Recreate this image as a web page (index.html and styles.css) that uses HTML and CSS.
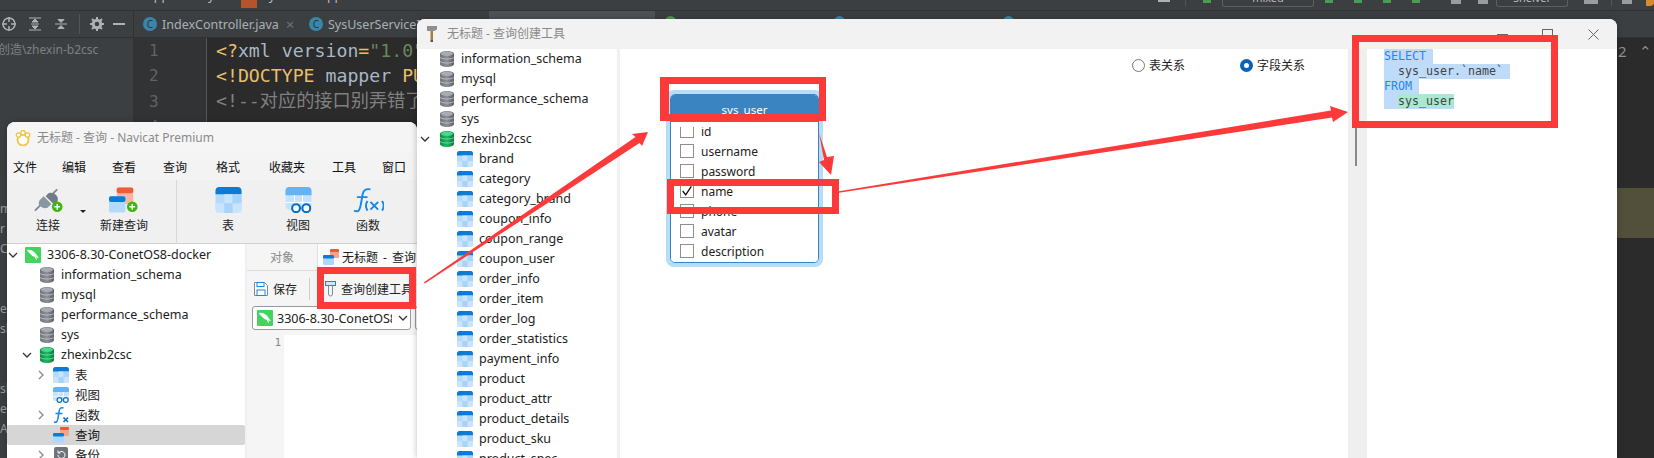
FILE: index.html
```html
<!DOCTYPE html>
<html lang="zh">
<head>
<meta charset="utf-8">
<title>Navicat 查询创建工具</title>
<link rel="stylesheet" href="styles.css">
</head>
<body>
<svg class="defs" aria-hidden="true">
  <defs>
    <linearGradient id="gGrey" x1="0" y1="0" x2="1" y2="0"><stop offset="0" stop-color="#6f757b"/><stop offset=".5" stop-color="#8d9197"/><stop offset="1" stop-color="#5b6066"/></linearGradient>
    <linearGradient id="gGreen" x1="0" y1="0" x2="1" y2="0"><stop offset="0" stop-color="#0c8a46"/><stop offset=".5" stop-color="#1fb866"/><stop offset="1" stop-color="#087a3c"/></linearGradient>
    <symbol id="db" viewBox="0 0 14 16"><path d="M0 3c0-4 14-4 14 0v10c0 4-14 4-14 0z" fill="url(#gGrey)"/><ellipse cx="7" cy="2.8" rx="6" ry="2.2" fill="#a9adb2"/><path d="M0 6.5c2 2 12 2 14 0M0 10.500c2 2 12 2 14 0" stroke="#d2d4d6" stroke-width=".7" fill="none"/></symbol>
    <symbol id="dbg" viewBox="0 0 14 16"><path d="M0 3c0-4 14-4 14 0v10c0 4-14 4-14 0z" fill="url(#gGreen)"/><ellipse cx="7" cy="2.800" rx="6" ry="2.200" fill="#4fd38d"/><path d="M0 6.500c2 2 12 2 14 0M0 10.500c2 2 12 2 14 0" stroke="#8fe6b8" stroke-width=".7" fill="none"/></symbol>
    <symbol id="tbl" viewBox="0 0 16 16"><rect width="16" height="16" rx="2.500" fill="#b4dbfc"/><path d="M0 2.500A2.500 2.500 0 0 1 2.500 0h11A2.500 2.500 0 0 1 16 2.500V4.500H0z" fill="#0d7bd6"/><path d="M5.500 4.500h5v5.500h-5zM0 10h5.500V16H2.500A2.500 2.500 0 0 1 0 13.500zM10.500 10H16v3.500a2.500 2.500 0 0 1-2.500 2.500h-3z" fill="#c9e5fd"/><path d="M10.500 4.500H16v5.500h-5.500zM5.500 10h5V16h-5z" fill="#a6d4fa"/></symbol>
    <symbol id="view" viewBox="0 0 16 16"><rect width="16" height="14" rx="2.500" fill="#c5e3fd"/><path d="M0 2.500A2.500 2.500 0 0 1 2.500 0h11A2.500 2.500 0 0 1 16 2.500V5H0z" fill="#63b3f6"/><path d="M5.500 5v9M10.500 5v9M0 9.500h16" stroke="#fff" stroke-width=".6"/><circle cx="6.500" cy="13" r="2.400" fill="#fff" stroke="#0d6fc4" stroke-width="1.300"/><circle cx="12.800" cy="13" r="2.400" fill="#fff" stroke="#0d6fc4" stroke-width="1.300"/></symbol>
    <symbol id="func" viewBox="0 0 16 16"><path d="M1 15c3 1 3.500-1 4-4l1.200-7c.4-2.500 1.600-3.800 4.300-3M2.500 6.500h7" fill="none" stroke="#1488e6" stroke-width="1.500"/><path d="M10.500 10.500l4.500 4.500M15 10.500L10.500 15" stroke="#0d6fc4" stroke-width="1.600"/></symbol>
    <symbol id="query" viewBox="0 0 16 16"><rect x="7" y="0" width="9" height="9" rx="1.500" fill="#f5a48a"/><rect x="7" y="0" width="9" height="3" rx="1.200" fill="#ea5a37"/><rect x="0" y="6" width="11" height="10" rx="1.500" fill="#aed8fb"/><rect x="0" y="6" width="11" height="3.400" rx="1.200" fill="#0d7bd6"/></symbol>
    <symbol id="mysql" viewBox="0 0 16 16"><rect width="16" height="16" rx="1" fill="#43d45f"/><path d="M2 3c3-1 7 1 9 4 1 1.500 2 3 3 3.500-1 .5-2 .2-2.800-.3L12 13c-1-.5-1.800-1.500-2.200-3C8 9.500 6 8 4.500 6 3.500 5.500 2.500 4.500 2 3z" fill="#fff"/></symbol>
    <symbol id="cr" viewBox="0 0 10 10"><path d="M3 1l4 4-4 4" fill="none" stroke="#8a8a8a" stroke-width="1.300"/></symbol>
    <symbol id="cd" viewBox="0 0 10 10"><path d="M1 3l4 4 4-4" fill="none" stroke="#333" stroke-width="1.300"/></symbol>
  </defs>
</svg>

<div class="ide">
  <div class="ide-top">
    <div class="crumbs">
      <span class="crumb-mapper">mapper</span><span class="crumb-sep">/</span><span class="crumb-sys">sys</span><span class="crumb-sep">/</span><i class="crumb-icon"></i><span class="crumb-file">SysUserMapper.xml</span>
    </div>
    <div class="run">
      <i class="r-bar"></i><i class="r-sep"></i><i class="r-green r-a"></i>
      <div class="r-box r-box-a"><span>mixed</span></div>
      <i class="r-green r-b"></i><i class="r-green r-c"></i><i class="r-green r-c"></i><i class="r-green r-c"></i>
      <i class="r-grey r-d"></i><i class="r-grey r-e"></i>
      <div class="r-box r-box-b"><span>Shelver</span></div>
      <i class="r-grey r-f"></i><i class="r-sep r-g"></i><i class="r-grey r-h"></i><i class="r-orange"></i>
    </div>
  </div>
  <div class="ide-tabs">
    <div class="tools">
      <svg class="tool" viewBox="0 0 14 14"><circle cx="7" cy="7" r="6" fill="none" stroke="#afb1b3" stroke-width="1.500"/><path d="M7 0v5M7 9v5M0 7h5M9 7h5" stroke="#afb1b3" stroke-width="1.500"/></svg>
      <svg class="tool" viewBox="0 0 14 14"><path d="M1 1h12M1 13h12M3 7h8M7 2l3 3H4zM7 12l3-3H4z" stroke="#afb1b3" fill="#afb1b3"/></svg>
      <svg class="tool" viewBox="0 0 14 14"><path d="M1 7h12M7 5.500l3-3H4zM7 8.500l3 3H4z" stroke="#afb1b3" fill="#afb1b3"/></svg>
      <i class="tool-sep"></i>
      <svg class="tool" viewBox="0 0 14 14"><circle cx="7" cy="7" r="3.800" fill="none" stroke="#afb1b3" stroke-width="3"/><path d="M7 0v3M7 11v3M0 7h3M11 7h3M2 2l2 2M10 10l2 2M2 12l2-2M10 4l2-2" stroke="#afb1b3" stroke-width="2"/></svg>
      <i class="tool-min"></i>
    </div>
    <div class="tab"><b class="cls">C</b><span>IndexController.java</span><em class="x">×</em></div>
    <div class="tab tab-b"><b class="cls">C</b><span>SysUserServiceImpl.java</span></div>
    <div class="tab-hi"></div>
    <i class="dot dot-g"></i><i class="dot dot-b1"></i><i class="dot dot-b2"></i>
  </div>
  <div class="ide-main">
    <div class="project">
      <div class="project-path">创造\zhexin-b2csc</div>
      <div class="project-frags">
        <span>m</span><span>r</span><span>C</span><span></span><span></span><span>er</span><span>sl</span><span></span><span></span><span>sl</span><span>e</span><span>Ap</span>
      </div>
    </div>
    <div class="lines"><span>1</span><span>2</span><span>3</span><span>4</span></div>
    <div class="code">
<div class="ln"><span class="o">&lt;?</span><span class="g">xml version</span><span class="o">=</span><span class="s">"1.0" encoding="UTF-8"</span><span class="o">?&gt;</span></div>
<div class="ln"><span class="o">&lt;!DOCTYPE</span> <span class="g">mapper</span> <span class="o">PUBLIC</span></div>
<div class="ln"><span class="c">&lt;!--对应的接口别弄错了--&gt;</span></div>
<div class="ln"><span class="o">&lt;mapper namespace=</span></div>
<div class="ln"></div>
<div class="ln"></div>
<div class="ln hl"></div>
<div class="ln hl"></div>
    </div>
    <div class="inspect"><span>2</span><span>⌃</span></div>
  </div>
</div>

<section class="win navicat">
  <header class="title">
    <svg class="logo" viewBox="0 0 16 16"><circle cx="8" cy="10" r="5.500" fill="#fff" stroke="#f0c53f" stroke-width="1.800"/><circle cx="3.500" cy="5" r="2.200" fill="#fff" stroke="#f0c53f" stroke-width="1.300"/><circle cx="8" cy="2.800" r="2.200" fill="#fff" stroke="#f0c53f" stroke-width="1.300"/><circle cx="12.500" cy="5" r="2.200" fill="#fff" stroke="#f0c53f" stroke-width="1.300"/></svg>
    <span>无标题 - 查询 - Navicat Premium</span>
  </header>
  <nav class="menu"><span>文件</span><span>编辑</span><span>查看</span><span>查询</span><span>格式</span><span>收藏夹</span><span>工具</span><span>窗口</span></nav>
  <div class="toolbar">
    <div class="tb-item">
      <svg class="tb-icon" viewBox="0 0 32 26"><path d="M2 24l6-6M25 2l-5 5" stroke="#7f8b98" stroke-width="2"/><path d="M7 13l4-4 8 8-4 4c-3 1-6 0-8-2s-1-4 0-6z" fill="#8b96a3"/><path d="M13 9l3-3c3-1 6 0 8 2s2 5 1 7l-3 3z" fill="#707c89"/><circle cx="25" cy="20" r="5.500" fill="#3fb80e"/><path d="M25 17v6M22 20h6" stroke="#fff" stroke-width="1.500"/></svg>
      <span>连接</span>
    </div>
    <i class="caret"></i>
    <div class="tb-item">
      <svg class="tb-icon" viewBox="0 0 32 26"><rect x="8" y="0" width="17" height="17" rx="2" fill="#f9b5a0"/><rect x="8" y="0" width="17" height="6" rx="2" fill="#ec5e3a"/><rect x="0" y="9" width="17" height="17" rx="2" fill="#b2dafc"/><rect x="0" y="9" width="17" height="6" rx="2" fill="#0d7bd6"/><circle cx="24" cy="20" r="5.500" fill="#3fb80e"/><path d="M24 17v6M21 20h6" stroke="#fff" stroke-width="1.500"/></svg>
      <span>新建查询</span>
    </div>
    <i class="tb-sep"></i>
    <div class="tb-item"><svg class="tb-icon"><use href="#tbl"/></svg><span>表</span></div>
    <div class="tb-item"><svg class="tb-icon"><use href="#view"/></svg><span>视图</span></div>
    <div class="tb-item">
      <svg class="tb-icon" viewBox="0 0 32 26"><path d="M1 24c5 2 6-1 7-6L10 7c.7-4 3-6 8-5M4 10h11" fill="none" stroke="#1488e6" stroke-width="2"/><path d="M15 14c-2 3-2 7 0 10M30 14c2 3 2 7 0 10M18 15l8 8M26 15l-8 8" fill="none" stroke="#1488e6" stroke-width="2"/></svg>
      <span>函数</span>
    </div>
  </div>
  <div class="nav-body">
    <div class="tree nav-tree">
      <div class="row l0"><svg class="chev"><use href="#cd"/></svg><svg class="ic16"><use href="#mysql"/></svg><span>3306-8.30-ConetOS8-docker</span></div>
      <div class="row l1"><i class="chev"></i><svg class="ic14"><use href="#db"/></svg><span>information_schema</span></div>
      <div class="row l1"><i class="chev"></i><svg class="ic14"><use href="#db"/></svg><span>mysql</span></div>
      <div class="row l1"><i class="chev"></i><svg class="ic14"><use href="#db"/></svg><span>performance_schema</span></div>
      <div class="row l1"><i class="chev"></i><svg class="ic14"><use href="#db"/></svg><span>sys</span></div>
      <div class="row l1"><svg class="chev"><use href="#cd"/></svg><svg class="ic14"><use href="#dbg"/></svg><span>zhexinb2csc</span></div>
      <div class="row l2"><svg class="chev"><use href="#cr"/></svg><svg class="ic16"><use href="#tbl"/></svg><span>表</span></div>
      <div class="row l2"><i class="chev"></i><svg class="ic16"><use href="#view"/></svg><span>视图</span></div>
      <div class="row l2"><svg class="chev"><use href="#cr"/></svg><svg class="ic16"><use href="#func"/></svg><span>函数</span></div>
      <div class="row l2 sel"><i class="chev"></i><svg class="ic16"><use href="#query"/></svg><span>查询</span></div>
      <div class="row l2"><svg class="chev"><use href="#cr"/></svg><svg class="ic16" viewBox="0 0 16 16"><rect width="14" height="16" x="1" rx="2" fill="#6d747b"/><path d="M5 8a3.500 3.500 0 1 0 1-2.500M5 3.500v2.500h2.500" fill="none" stroke="#fff"/></svg><span>备份</span></div>
    </div>
    <div class="pane-split"></div>
    <div class="pane">
      <div class="pane-tabs">
        <span class="obj-tab">对象</span>
        <span class="q-tab"><svg class="ic16 q-ic"><use href="#query"/></svg>无标题 - 查询</span>
      </div>
      <div class="pane-tools">
        <svg class="save" viewBox="0 0 16 16"><path d="M1.500 1.500h10l3 3v10h-13z" fill="#fff" stroke="#7f8b98"/><rect x="4" y="1.500" width="7" height="4" fill="#fff" stroke="#1488e6"/><rect x="4" y="9" width="8" height="5.500" fill="#fff" stroke="#1488e6"/></svg>
        <span>保存</span>
        <i class="pane-sep"></i>
        <svg class="qtool" viewBox="0 0 11 16"><rect x=".5" y=".5" width="10" height="4" fill="#cfe6fb" stroke="#1488e6"/><path d="M3.500 4.500v8.500a2 2 0 0 0 4 0V4.500" fill="none" stroke="#7f8b98"/></svg>
        <span>查询创建工具</span>
      </div>
      <div class="combos">
        <div class="combo"><svg class="ic16"><use href="#mysql"/></svg><span class="combo-text">3306-8.30-ConetOS8-docker</span><svg class="combo-chev"><use href="#cd"/></svg></div>
        <div class="combo combo-b"></div>
      </div>
      <div class="nav-editor"><div class="nav-gutter">1</div><div class="nav-text"></div></div>
    </div>
  </div>
</section>

<section class="win creator">
  <header class="title c-title">
    <svg class="hammer" viewBox="0 0 12 16"><path d="M1 0h10v3.500l-3 1.500H1z" fill="#8f8f8f"/><rect x="4.500" y="5" width="2.500" height="9" fill="#b07a43"/><rect x="4.500" y="14" width="2.500" height="2" fill="#555"/></svg>
    <span>无标题 - 查询创建工具</span>
    <div class="controls">
      <i class="c-min"></i><i class="c-max"></i>
      <svg class="c-close" viewBox="0 0 11 11"><path d="M.5.500l10 10M10.500.500l-10 10" stroke="#666"/></svg>
    </div>
  </header>
  <div class="c-body">
    <div class="tree c-tree">
      <div class="row c1"><i class="chev"></i><svg class="ic14"><use href="#db"/></svg><span>information_schema</span></div>
      <div class="row c1"><i class="chev"></i><svg class="ic14"><use href="#db"/></svg><span>mysql</span></div>
      <div class="row c1"><i class="chev"></i><svg class="ic14"><use href="#db"/></svg><span>performance_schema</span></div>
      <div class="row c1"><i class="chev"></i><svg class="ic14"><use href="#db"/></svg><span>sys</span></div>
      <div class="row c1"><svg class="chev"><use href="#cd"/></svg><svg class="ic14"><use href="#dbg"/></svg><span>zhexinb2csc</span></div>
      <div class="row c2"><svg class="ic16"><use href="#tbl"/></svg><span>brand</span></div>
      <div class="row c2"><svg class="ic16"><use href="#tbl"/></svg><span>category</span></div>
      <div class="row c2"><svg class="ic16"><use href="#tbl"/></svg><span>category_brand</span></div>
      <div class="row c2"><svg class="ic16"><use href="#tbl"/></svg><span>coupon_info</span></div>
      <div class="row c2"><svg class="ic16"><use href="#tbl"/></svg><span>coupon_range</span></div>
      <div class="row c2"><svg class="ic16"><use href="#tbl"/></svg><span>coupon_user</span></div>
      <div class="row c2"><svg class="ic16"><use href="#tbl"/></svg><span>order_info</span></div>
      <div class="row c2"><svg class="ic16"><use href="#tbl"/></svg><span>order_item</span></div>
      <div class="row c2"><svg class="ic16"><use href="#tbl"/></svg><span>order_log</span></div>
      <div class="row c2"><svg class="ic16"><use href="#tbl"/></svg><span>order_statistics</span></div>
      <div class="row c2"><svg class="ic16"><use href="#tbl"/></svg><span>payment_info</span></div>
      <div class="row c2"><svg class="ic16"><use href="#tbl"/></svg><span>product</span></div>
      <div class="row c2"><svg class="ic16"><use href="#tbl"/></svg><span>product_attr</span></div>
      <div class="row c2"><svg class="ic16"><use href="#tbl"/></svg><span>product_details</span></div>
      <div class="row c2"><svg class="ic16"><use href="#tbl"/></svg><span>product_sku</span></div>
      <div class="row c2"><svg class="ic16"><use href="#tbl"/></svg><span>product_spec</span></div>
    </div>
    <div class="c-split"></div>
    <div class="canvas">
      <div class="radios">
        <label class="radio"><i class="rad"></i>表关系</label>
        <label class="radio"><i class="rad on"></i>字段关系</label>
      </div>
      <div class="er">
        <div class="er-inner">
          <div class="er-head">sys_user</div>
          <div class="er-body">
            <div class="er-scroll">
              <div class="er-row"><i class="cb"></i>id</div>
              <div class="er-row"><i class="cb"></i>username</div>
              <div class="er-row"><i class="cb"></i>password</div>
              <div class="er-row"><i class="cb"><svg viewBox="0 0 14 14"><path d="M2 7l3.500 4.500L12 1.500" fill="none" stroke="#111" stroke-width="1.500"/></svg></i>name</div>
              <div class="er-row"><i class="cb"></i>phone</div>
              <div class="er-row"><i class="cb"></i>avatar</div>
              <div class="er-row"><i class="cb"></i>description</div>
            </div>
          </div>
        </div>
      </div>
    </div>
    <div class="c-gutter"><i class="thumb"></i></div>
    <div class="sql">
<div class="sql-ln sql-sel"><span class="kw">SELECT </span></div>
<div class="sql-ln sql-sel">  sys_user.`name` </div>
<div class="sql-ln sql-sel"><span class="kw">FROM </span></div>
<div class="sql-ln sql-sel">  <span class="sql-hit">sys_user</span></div>
    </div>
  </div>
</section>

<div class="mark m-tool"></div>
<div class="mark m-head"></div>
<div class="mark m-name"></div>
<div class="mark m-sql"></div>
<svg class="arrows" viewBox="0 0 1654 458" aria-hidden="true">
  <polygon points="424,282.300 635.500,137.100 632,134 648,132 642,146 639.500,142.900 424.800,283.500"/>
  <polygon points="819,133 827,157 834,156 831,175 819,162 824,160"/>
  <polygon points="839,191.200 1331,110.500 1330,106 1348,112 1333,122 1332,117.500 839,192.800"/>
</svg>
</body>
</html>
```

FILE: styles.css
```css
* { box-sizing: border-box; }
html, body { margin: 0; height: 100%; }
body {
  width: 1654px;
  height: 458px;
  overflow: hidden;
  position: relative;
  background: #2b2b2b;
  font-family: "Noto Sans", "Noto Sans CJK SC", sans-serif;
  font-size: 12px;
  color: #222;
}
i, em { font-style: normal; }
.defs { position: absolute; width: 0; height: 0; }

/* IDE behind the windows */
.ide { display: flex; flex-direction: column; height: 458px; background: #2b2b2b; }
.ide-top {
  height: 11px; flex: none; background: #3c3f41; border-bottom: 1px solid #323232;
  display: flex; justify-content: space-between; overflow: hidden;
}
.crumbs { display: flex; align-items: flex-end; height: 3px; padding-left: 135px; color: #bbb; font-size: 12.500px; line-height: 14px; }
.crumb-sep { margin: 0 8px; color: #777; }
.crumb-icon { width: 16px; height: 8px; background: #b5532b; margin-right: 5px; flex: none; align-self: flex-start; margin-bottom: -5px; }
.crumb-mapper, .crumb-sys, .crumb-file { white-space: nowrap; }
.run { display: flex; align-items: flex-start; height: 10px; }
.run i { display: block; flex: none; }
.r-bar { width: 12px; height: 2px; background: #afb1b3; margin-right: 15px; }
.r-sep { width: 1px; height: 6px; background: #555; margin-right: 17px; }
.r-green { width: 8px; height: 3px; background: #499c54; }
.r-a { margin-right: 11px; }
.r-box { width: 92px; height: 7px; border: 1px solid #5e6060; border-top: 0; border-radius: 0 0 3px 3px; overflow: hidden; flex: none; }
.r-box span { display: block; margin-top: -8px; font-size: 11px; line-height: 11px; text-align: center; color: #bbb; }
.r-b { margin-left: 11px; }
.r-c { margin-left: 21px; }
.r-grey { width: 10px; height: 4px; background: #9a9c9e; }
.r-d { margin-left: 31px; }
.r-e { margin-left: 17px; }
.r-box-b { width: 72px; margin-left: 8px; }
.r-f { margin-left: 16px; width: 14px; }
.r-g { margin: 0 0 0 13px; }
.r-h { margin-left: 10px; }
.r-orange { width: 8px; height: 6px; background: #d98a2b; margin-left: 14px; border-radius: 0 0 4px 0; }

.ide-tabs {
  height: 27px; flex: none; background: #3c3f41; border-bottom: 1px solid #323232;
  display: flex; align-items: center; color: #a9b0b6; font-size: 12.500px; position: relative;
}
.tools { width: 134px; flex: none; height: 100%; display: flex; align-items: center; padding-left: 2px; border-right: 1px solid #323232; }
.tool { width: 14px; height: 14px; flex: none; margin-right: 12px; }
.tool-sep { width: 1px; height: 20px; background: #515355; margin: 0 10px 0 -1px; }
.tool-min { width: 12px; height: 2px; background: #afb1b3; margin-left: -3px; }
.tab { display: flex; align-items: center; padding-left: 9px; white-space: nowrap; flex: none; width: 166px; }
.tab-b { width: auto; }
.cls {
  width: 14px; height: 14px; border-radius: 50%; background: #3b86a8; color: #1f3642; font-size: 10px; font-weight: 400;
  display: flex; align-items: center; justify-content: center; margin-right: 5px; flex: none;
}
.x { color: #6f7173; margin-left: 7px; font-size: 15px; }
.tab-hi { position: absolute; left: 489px; top: 0; width: 166px; height: 100%; background: #4e5254; }
.dot { position: absolute; top: 5px; width: 11px; height: 11px; border-radius: 50%; }
.dot-g { left: 665px; background: #499c54; }
.dot-b1 { left: 834px; background: #3b86a8; }
.dot-b2 { left: 1003px; background: #3b86a8; }

.ide-main { flex: 1; display: flex; min-height: 0; }
.project { width: 134px; flex: none; background: #3c3f41; border-right: 1px solid #323232; color: #7c8083; font-size: 12px; overflow: hidden; }
.project-path { height: 24px; line-height: 23px; white-space: nowrap; margin: 0 0 137px -2px; }
.project-frags { display: flex; flex-direction: column; color: #9a9da0; font-size: 12px; }
.project-frags span { height: 20px; line-height: 20px; }
.lines { width: 73px; flex: none; background: #313335; border-right: 1px solid #555; color: #606366; font-family: "DejaVu Sans Mono", monospace; font-size: 16px; display: flex; flex-direction: column; padding-left: 15px; }
.lines span { height: 25.400px; line-height: 25px; }
.code { flex: 1; font-family: "DejaVu Sans Mono", "Noto Sans CJK SC", monospace; font-size: 18.200px; color: #bababa; }
.ln { height: 25px; line-height: 25px; padding-left: 9px; white-space: nowrap; }
.o { color: #e8bf6a; }
.g { color: #a9b7c6; }
.s { color: #6a8759; }
.c { color: #808080; }
.hl { background: #52503a; }
.inspect { position: absolute; left: 1618px; top: 40px; display: flex; gap: 12px; color: #8d9092; font-size: 15px; line-height: 22px; }

/* windows */
.win { position: absolute; background: #fff; border-radius: 8px 8px 0 0; overflow: hidden; box-shadow: 0 0 6px rgba(0,0,0,.25); }
.title { display: flex; align-items: center; color: #8a8a8a; font-size: 12px; background: #f3f3f3; }
.title span { padding-bottom: 2px; }
.navicat { left: 7px; top: 122px; width: 410px; height: 336px; display: flex; flex-direction: column; }
.navicat .title { height: 31px; flex: none; padding-left: 8px; background: #f5f5f5; }
.logo { width: 16px; height: 16px; margin-right: 6px; flex: none; }
.menu {
  height: 27px; flex: none; background: #f3f3f3; display: grid; align-items: center;
  grid-template-columns: 49px 50px 51px 53px 53px 63px 50px 40px; padding-left: 6px; font-size: 12px; color: #111;
}
.toolbar { height: 64px; flex: none; background: #f0f0f0; border-bottom: 1px solid #d0d0d0; display: flex; padding-left: 6px; color: #222; }
.tb-item { width: 70px; flex: none; display: flex; flex-direction: column; align-items: center; padding-top: 7px; gap: 4px; }
.tb-icon { width: 31px; height: 26px; flex: none; }
.tb-item span { line-height: 18px; }
.caret { width: 0; height: 0; border: 3px solid transparent; border-top: 3px solid #222; border-bottom: 0; margin: 30px 3px 0 -3px; flex: none; }
.tb-sep { width: 1px; height: 64px; background: #d8d8d8; margin: 0 16px 0 17px; flex: none; }
.nav-body { flex: 1; display: flex; min-height: 0; }
.tree { color: #1c1c1c; font-size: 12.500px; overflow: hidden; }
.nav-tree { width: 238px; flex: none; padding-top: 1px; background: #fff; }
.pane-split { width: 2px; flex: none; background: #f0f0f0; }
.row { display: flex; align-items: center; height: 20px; white-space: nowrap; }
.row span { padding-bottom: 2px; }
.chev { width: 10px; height: 10px; flex: none; display: block; }
.ic16 { width: 16px; height: 16px; flex: none; }
.ic14 { width: 14px; height: 16px; flex: none; }
.l0 { padding-left: 1px; }
.l0 .chev { margin-right: 7px; }
.l0 .ic16 { margin-right: 6px; }
.l1 { padding-left: 15px; }
.l1 .chev { margin-right: 8px; }
.l1 .ic14 { margin-right: 7px; }
.l2 { padding-left: 29px; }
.l2 .chev { margin-right: 7px; }
.l2 .ic16 { margin-right: 6px; }
.sel { background: #d6d6d6; border-radius: 2px; }
.pane { flex: 1; display: flex; flex-direction: column; min-width: 0; background: #f5f5f5; font-size: 12px; }
.pane-tabs { height: 27px; flex: none; display: flex; border-bottom: 1px solid #dcdcdc; }
.obj-tab { width: 71px; flex: none; display: flex; align-items: center; justify-content: center; color: #8a8a8a; border-right: 1px solid #e0e0e0; }
.q-tab { display: flex; align-items: center; white-space: pre; padding-left: 5px; background: #fbfbfb; flex: 1; overflow: hidden; color: #222; word-spacing: 2px; }
.q-ic { margin-right: 3px; }
.pane-tools { height: 35px; flex: none; display: flex; align-items: center; padding-left: 6px; color: #222; }
.save { width: 16px; height: 16px; margin-right: 4px; flex: none; }
.pane-sep { width: 1px; height: 22px; background: #ccc; margin: 0 15px 0 12px; flex: none; }
.qtool { width: 11px; height: 16px; flex: none; margin-right: 5px; }
.combos { display: flex; flex: none; padding-left: 5px; }
.combo { width: 159px; height: 24px; background: #fff; border: 1px solid #9a9a9a; border-radius: 3px; display: flex; align-items: center; padding-left: 4px; flex: none; font-size: 12.500px; color: #222; }
.combo-text { width: 115px; margin-left: 4px; overflow: hidden; white-space: nowrap; flex: none; }
.combo-chev { width: 10px; height: 10px; margin-left: 6px; flex: none; }
.combo-b { width: 20px; margin-left: 4px; }
.nav-editor { flex: 1; display: flex; margin-top: 5px; }
.nav-gutter { width: 37px; background: #f5f5f5; text-align: right; padding-right: 3px; color: #888; font-family: "DejaVu Sans Mono", monospace; font-size: 11px; line-height: 16px; }
.nav-text { flex: 1; background: #fff; }

/* query builder window */
.creator { left: 417px; top: 19px; width: 1200px; height: 439px; display: flex; flex-direction: column; }
.c-title { height: 30px; flex: none; padding-left: 9px; background: #f2f2f2; }
.hammer { width: 12px; height: 16px; margin-right: 9px; flex: none; }
.controls { margin-left: auto; display: flex; align-items: center; padding-right: 18px; gap: 0; }
.c-min { width: 11px; height: 1px; background: #666; margin-right: 34px; }
.c-max { width: 11px; height: 11px; border: 1px solid #666; margin-right: 35px; }
.c-close { width: 11px; height: 11px; display: block; }
.c-body { flex: 1; display: flex; min-height: 0; }
.c-tree { width: 200px; flex: none; }
.c1 { padding-left: 3px; }
.c1 .chev { margin-right: 10px; }
.c1 .ic14 { margin-right: 7px; }
.c2 { padding-left: 40px; }
.c2 .ic16 { margin-right: 6px; }
.c-split { width: 3px; flex: none; background: #f0f0f0; }
.canvas { width: 728px; flex: none; position: relative; background: #fff; }
.radios { display: flex; justify-content: flex-start; padding: 8px 0 0 512px; color: #222; font-size: 12px; }
.radio { display: flex; align-items: center; width: 108px; white-space: nowrap; gap: 4px; height: 16px; }
.rad { width: 13px; height: 13px; border-radius: 50%; border: 1px solid #777; background: #fff; flex: none; }
.rad.on { border: 4px solid #0a62b8; }
.er { position: absolute; left: 46px; top: 41px; width: 157px; height: 177px; border: 4px solid #b6def8; border-radius: 8px; background: #b6def8; }
.er-inner { height: 100%; border-radius: 5px; overflow: hidden; border: 1px solid #3a84c1; background: #fff; display: flex; flex-direction: column; }
.er-head { height: 27px; flex: none; background: #3a84c1; color: #fff; text-align: center; font-size: 11.500px; line-height: 15px; padding-top: 7px; }
.er-body { flex: 1; min-height: 0; padding-top: 5px; background: #fff; }
.er-scroll { height: 100%; overflow: hidden; }
.er-row { height: 20px; display: flex; align-items: center; padding-left: 9px; gap: 7px; font-size: 12px; color: #222; }
.er-row:first-child { margin-top: -6px; }
.cb { width: 14px; height: 14px; border: 1px solid #8f8f8f; background: #fff; flex: none; display: block; }
.cb svg { display: block; width: 12px; height: 12px; }
.c-gutter { width: 19px; flex: none; background: #efefef; padding-left: 7px; }
.thumb { display: block; width: 2px; height: 117px; background: #888; }
.sql { flex: 1; background: #fff; padding-left: 17px; font-family: "DejaVu Sans Mono", monospace; font-size: 11.630px; color: #444; }
.sql-ln { height: 15px; line-height: 15px; white-space: pre; width: fit-content; }
.sql-sel { background: #bfdbfa; }
.kw { color: #1e88f5; }
.sql-hit { background: #a9e9cf; }

/* annotation overlays */
.mark { position: absolute; border: 7px solid #fd3a3a; }
.m-tool { left: 317px; top: 267px; width: 99px; height: 42px; }
.m-head { left: 660px; top: 77px; width: 166px; height: 44px; border-left-width: 9px; }
.m-name { left: 667px; top: 179px; width: 172px; height: 35px; }
.m-sql { left: 1352px; top: 35px; width: 206px; height: 93px; }
.arrows { position: absolute; left: 0; top: 0; width: 1654px; height: 458px; fill: #fd3a3a; pointer-events: none; }
```
